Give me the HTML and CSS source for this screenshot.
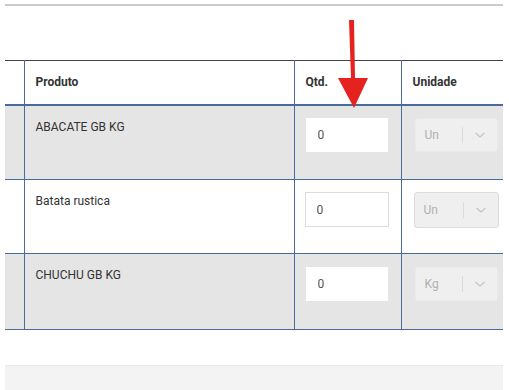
FILE: index.html
```html
<!DOCTYPE html>
<html lang="en">
  <head>
    <meta charset="UTF-8" />
    <meta name="viewport" content="width=device-width, initial-scale=1.0" />
    <title>Pedido</title>
    <link rel="stylesheet" href="styles.css">
  </head>
  <body>
    <div class="page">
      <div class="top-rule"></div>
      <table class="items">
        <colgroup>
          <col class="col-check" />
          <col class="col-product" />
          <col class="col-qty" />
          <col class="col-unit" />
        </colgroup>
        <thead>
          <tr>
            <th></th>
            <th>Produto</th>
            <th>Qtd.</th>
            <th>Unidade</th>
          </tr>
        </thead>
        <tbody>
          <tr class="odd">
            <td></td>
            <td class="name">ABACATE GB KG</td>
            <td><input class="qty" type="text" value="0" /></td>
            <td>
              <div class="unit-select"><span class="unit-value">Un</span><span class="unit-arrow"><svg width="12" height="8" viewBox="0 0 12 8"><path d="M1.5 2 L6 6 L10.5 2" fill="none" stroke="#c4c4c4" stroke-width="1.2"/></svg></span></div>
            </td>
          </tr>
          <tr class="even">
            <td></td>
            <td class="name">Batata rustica</td>
            <td><input class="qty bordered" type="text" value="0" /></td>
            <td>
              <div class="unit-select bordered"><span class="unit-value">Un</span><span class="unit-arrow"><svg width="12" height="8" viewBox="0 0 12 8"><path d="M1.5 2 L6 6 L10.5 2" fill="none" stroke="#c4c4c4" stroke-width="1.2"/></svg></span></div>
            </td>
          </tr>
          <tr class="odd last">
            <td></td>
            <td class="name">CHUCHU GB KG</td>
            <td><input class="qty" type="text" value="0" /></td>
            <td>
              <div class="unit-select"><span class="unit-value">Kg</span><span class="unit-arrow"><svg width="12" height="8" viewBox="0 0 12 8"><path d="M1.5 2 L6 6 L10.5 2" fill="none" stroke="#c4c4c4" stroke-width="1.2"/></svg></span></div>
            </td>
          </tr>
        </tbody>
      </table>
      <div class="footer-bar"></div>
    </div>

    <svg class="pointer" width="40" height="100" viewBox="0 0 40 100">
      <path d="M9 0 L14 0 L15 58 L28 58 L14 88 L-2 58 L11 58 Z" fill="#e52220"/>
    </svg>
  </body>
</html>
```

FILE: styles.css
```css
body {
  margin: 0;
  padding: 0;
  background-color: #fff;
  font-family: Roboto, "Liberation Sans", Arial, sans-serif;
  font-size: 12px;
  color: #333;
}

.page {
  width: 498px;
  margin-left: 5px;
  padding-top: 4px;
}

.top-rule {
  height: 2px;
  background-color: #cbcbcb;
}

.items {
  width: 498px;
  margin-top: 54px;
  border-collapse: collapse;
  table-layout: fixed;
}

.col-check {
  width: 19px;
}

.col-product {
  width: 270px;
}

.col-qty {
  width: 107px;
}

.col-unit {
  width: 102px;
}

.items th,
.items td {
  box-sizing: border-box;
  border: 1px solid #4a6b9a;
  vertical-align: top;
  text-align: left;
  padding: 0 11px;
}

.items tr > :first-child {
  border-left: none;
  padding: 0;
}

.items tr > :last-child {
  border-right: none;
}

.items th {
  border-top: 1px solid #444;
  border-bottom: 2px solid #4a6b9a;
  height: 44px;
  vertical-align: middle;
  font-weight: bold;
  color: #333;
}

.items td {
  height: 75px;
  padding-top: 12px;
}

.items td.name {
  padding-top: 14px;
}

.items tbody tr.even td {
  height: 74px;
}

.items tbody tr.last td {
  height: 76px;
  padding-top: 13px;
}

.items tbody tr.last td.name {
  padding-top: 14px;
}

.odd {
  background-color: #e5e5e5;
}

.qty {
  box-sizing: border-box;
  width: 82px;
  height: 34px;
  border: 1px solid #fff;
  background-color: #fff;
  padding: 0 11px;
  font-family: Roboto, "Liberation Sans", Arial, sans-serif;
  font-size: 12px;
  color: #555;
  outline: none;
}

.qty.bordered {
  border-color: #dcdcdc;
  width: 84px;
  height: 35px;
  margin-left: -1px;
}

.unit-select {
  box-sizing: border-box;
  display: flex;
  align-items: center;
  width: 83px;
  height: 34px;
  margin-left: 2px;
  background-color: #efefef;
  border: 1px solid #eaeaea;
  border-radius: 3px;
  color: #b0b0b0;
}

.unit-select.bordered {
  width: 85px;
  height: 36px;
  margin-left: 1px;
  border-color: #dcdcdc;
}

.unit-value {
  flex: 1;
  padding-left: 9px;
  font-size: 12px;
}

.unit-arrow {
  display: flex;
  align-items: center;
  justify-content: center;
  width: 34px;
  height: 16px;
  border-left: 1px solid #dcdcdc;
}

.footer-bar {
  height: 26px;
  margin-top: 35px;
  background-color: #f3f3f3;
  border-top: 1px solid #e9e9e9;
}

.pointer {
  position: absolute;
  left: 340px;
  top: 20px;
  overflow: visible;
}
```
